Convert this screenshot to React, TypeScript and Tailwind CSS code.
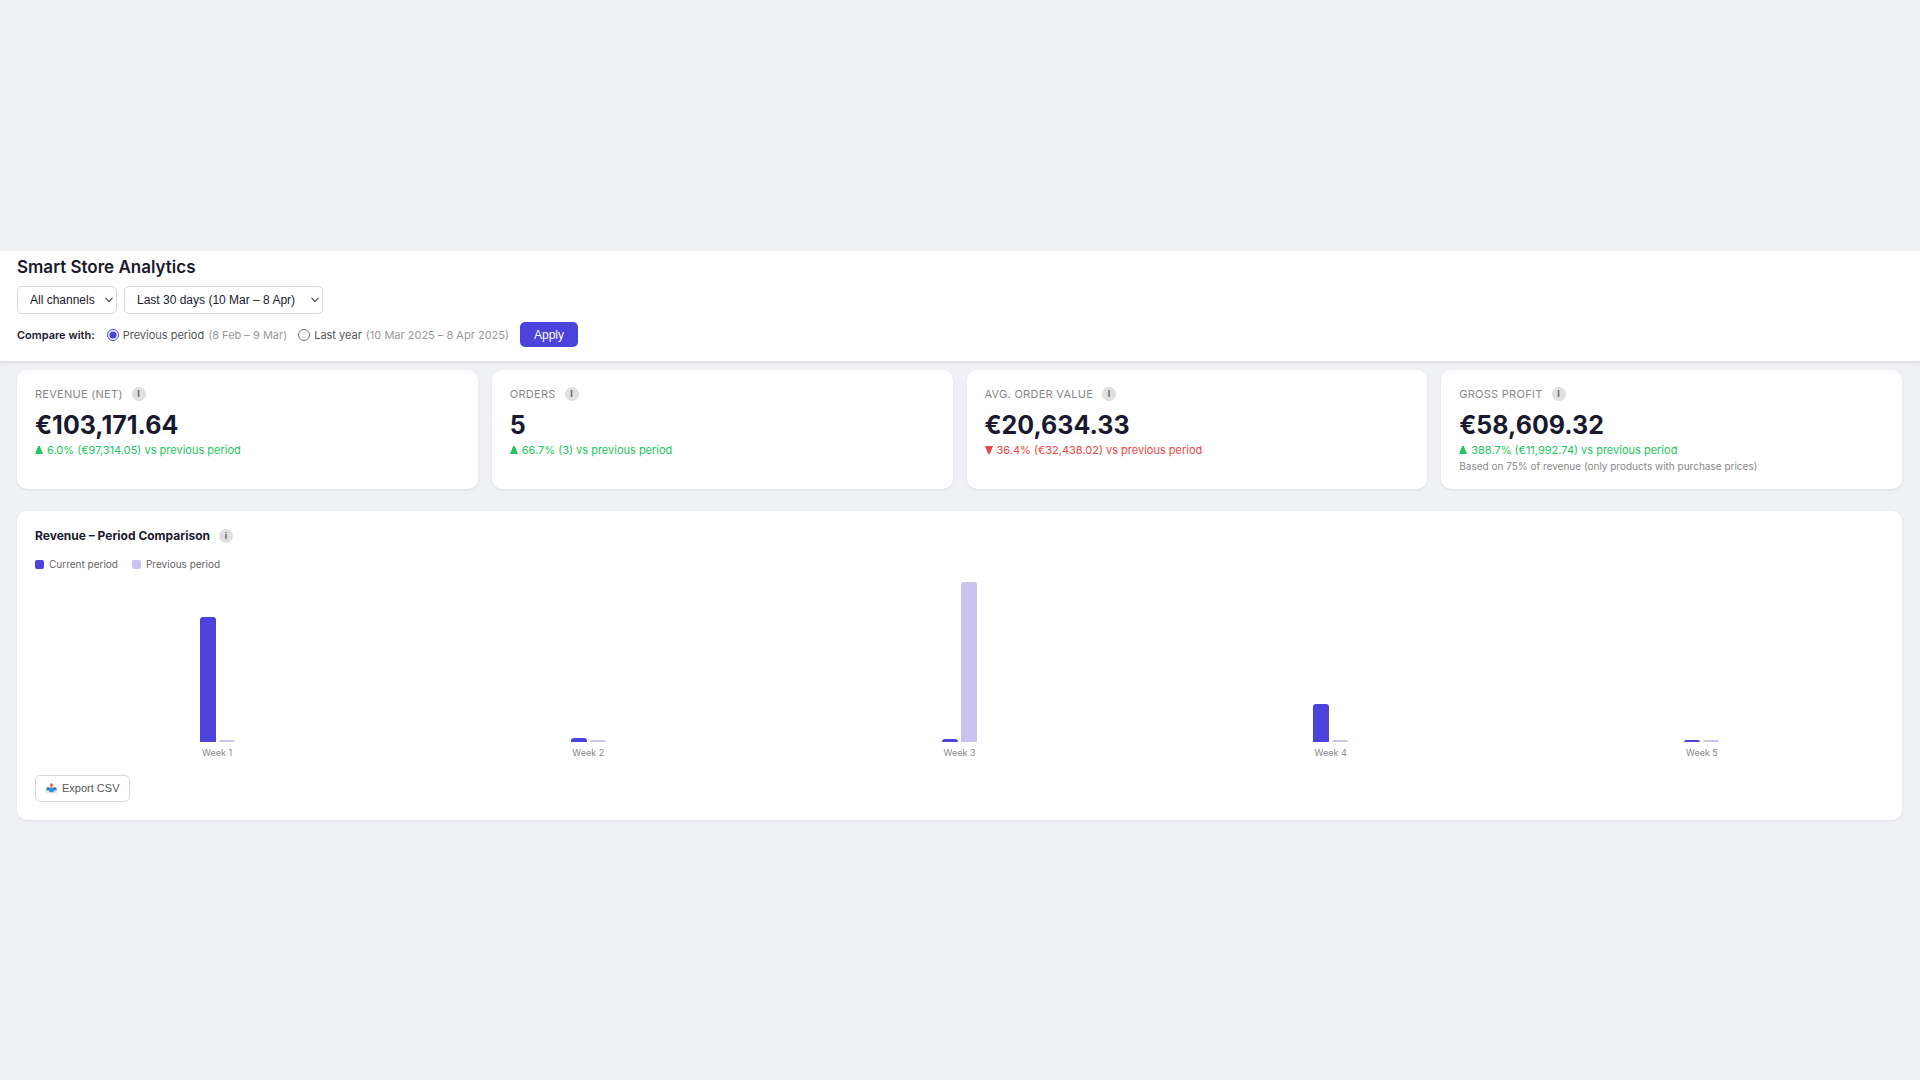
import { useState } from "react";

type Kpi = {
    label: string;
    value: string;
    up: boolean;
    change: string;
    note?: string;
};

const kpis: Kpi[] = [
    { label: "Revenue (net)", value: "€103,171.64", up: true, change: "6.0% (€97,314.05) vs previous period" },
    { label: "Orders", value: "5", up: true, change: "66.7% (3) vs previous period" },
    { label: "Avg. order value", value: "€20,634.33", up: false, change: "36.4% (€32,438.02) vs previous period" },
    {
        label: "Gross profit",
        value: "€58,609.32",
        up: true,
        change: "388.7% (€11,992.74) vs previous period",
        note: "Based on 75% of revenue (only products with purchase prices)",
    },
];

// bar heights in px, the tallest one fills the chart
const weeks = [
    { label: "Week 1", current: 125, previous: 2 },
    { label: "Week 2", current: 4, previous: 2 },
    { label: "Week 3", current: 3, previous: 160 },
    { label: "Week 4", current: 38, previous: 2 },
    { label: "Week 5", current: 2, previous: 2 },
];

const InfoBadge = ({ children }: { children: string }) => (
    <button
        type="button"
        aria-label="More info"
        className="flex h-[14px] w-[14px] shrink-0 items-center justify-center rounded-full bg-[#e0e0e0] text-[9px] leading-[14px] font-bold text-[#666]"
    >
        {children}
    </button>
);

const Triangle = ({ up }: { up: boolean }) => (
    <svg width="8" height="8" viewBox="0 0 8 8" fill="currentColor" aria-hidden="true">
        <path d={up ? "M3.2 0h1.6L8 8H0Z" : "M0 0H8L4.8 8H3.2Z"} />
    </svg>
);

const Dropdown = ({ label, options, className }: { label: string; options: string[]; className: string }) => (
    <div className={`relative ${className}`}>
        <select
            aria-label={label}
            className="h-7 w-full appearance-none rounded-[5px] border border-[#d9d9d9] bg-white pr-4 pl-3 font-['Liberation_Sans',sans-serif] text-[12px] leading-4 text-[#1a1a2e]"
        >
            {options.map((option) => (
                <option key={option}>{option}</option>
            ))}
        </select>
        <svg
            className="pointer-events-none absolute top-[11px] right-1"
            width="8"
            height="6"
            viewBox="0 0 8 6"
            fill="none"
            stroke="#444"
            strokeWidth="1.1"
            strokeLinecap="round"
            strokeLinejoin="round"
            aria-hidden="true"
        >
            <path d="M.8 1.2 4 4.6 7.2 1.2" />
        </svg>
    </div>
);

const OutboxIcon = () => (
    <svg width="11" height="11" viewBox="0 0 11 11" aria-hidden="true">
        <path d="M.8 5h9.4l.6 3v2.6H.2V8z" fill="#e6e9ec" />
        <path d="M.8 4.8h9.4l.6 2.6H8.4L7 9.2H4L2.6 7.4H.2z" fill="#3b8fe0" />
        <path d="M.8 4.6h2.6l.4 1.2H.5zM7.6 4.6h2.6l.3 1.2H7.2z" fill="#4a6078" />
        <path d="M5.5 0 7.6 2.2H6.5v2.4h-2V2.2H3.4z" fill="#f05545" />
    </svg>
);

const App = () => {
    const [compare, setCompare] = useState("previous");

    const periods = [
        { id: "previous", name: "Previous period", range: "(8 Feb – 9 Mar)" },
        { id: "year", name: "Last year", range: "(10 Mar 2025 – 8 Apr 2025)" },
    ];

    return (
        <div className="min-h-screen bg-[#f0f1f5] pt-[251px] font-[Inter,sans-serif] text-[#1a1a2e]">
            <header className="bg-white pt-1 pr-[18px] pb-[14px] pl-[17px] shadow-[0_2px_3px_rgba(0,0,0,0.08)]">
                <h1 className="text-[17px] leading-6 font-semibold">Smart Store Analytics</h1>

                <div className="mt-[7px] flex gap-[7px]">
                    <Dropdown label="Channel" options={["All channels"]} className="w-[100px]" />
                    <Dropdown label="Date range" options={["Last 30 days (10 Mar – 8 Apr)"]} className="w-[199px]" />
                </div>

                <form
                    className="mt-2 flex items-center text-[11px] leading-4"
                    onSubmit={(e) => e.preventDefault()}
                >
                    <span className="mr-3 font-semibold">Compare with:</span>
                    {periods.map((period) => (
                        <label key={period.id} className="mr-[11px] flex items-center gap-1 text-[#555]">
                            <input
                                type="radio"
                                name="compare"
                                checked={compare === period.id}
                                onChange={() => setCompare(period.id)}
                                className="h-3 w-3 accent-[#4b43dc]"
                            />
                            <span>{period.name}</span>
                            <span className="text-[#999]">{period.range}</span>
                        </label>
                    ))}
                    <button
                        type="submit"
                        className="h-[25px] rounded-[5px] bg-[#4b43dc] px-[14px] font-['Liberation_Sans',sans-serif] text-[12px] text-white"
                    >
                        Apply
                    </button>
                </form>
            </header>

            <main className="pt-[9px] pr-[18px] pl-[17px]">
                <section className="grid grid-cols-4 gap-[14px]">
                    {kpis.map((kpi) => (
                        <article
                            key={kpi.label}
                            className="rounded-[10px] bg-white px-[18px] pt-4 pb-[15px] shadow-[0_1px_3px_rgba(0,0,0,0.08)]"
                        >
                            <div className="flex items-center gap-[9px] text-[11px] leading-4 tracking-wide text-[#888] uppercase">
                                <span>{kpi.label}</span>
                                <InfoBadge>I</InfoBadge>
                            </div>
                            <div className="mt-[7px] text-[25px] leading-8 font-bold">{kpi.value}</div>
                            <div
                                className={`mt-px flex items-center gap-1 text-[11px] leading-4 ${kpi.up ? "text-[#22c55e]" : "text-[#ef4444]"}`}
                            >
                                <Triangle up={kpi.up} />
                                <span>{kpi.change}</span>
                            </div>
                            {kpi.note && <p className="text-[10px] leading-4 text-[#888]">{kpi.note}</p>}
                        </article>
                    ))}
                </section>

                <section className="mt-[22px] rounded-[10px] bg-white px-[18px] pt-[17px] pb-[18px] shadow-[0_1px_3px_rgba(0,0,0,0.08)]">
                    <div className="flex items-center gap-[9px]">
                        <h2 className="text-[12px] leading-4 font-bold">Revenue – Period Comparison</h2>
                        <InfoBadge>i</InfoBadge>
                    </div>

                    <div className="mt-3 flex gap-[14px] text-[10px] leading-4 text-[#666]">
                        <span className="flex items-center gap-[5px]">
                            <i className="h-[9px] w-[9px] rounded-[2px] bg-[#4b43dc]" />
                            Current period
                        </span>
                        <span className="flex items-center gap-[5px]">
                            <i className="h-[9px] w-[9px] rounded-[2px] bg-[#c7c4ef]" />
                            Previous period
                        </span>
                    </div>

                    <div className="mt-[10px] flex gap-[7px]">
                        {weeks.map((week) => (
                            <div key={week.label} className="flex-1">
                                <div className="flex h-[160px] items-end justify-center gap-[3px]">
                                    <div className="w-4 rounded-t-[3px] bg-[#4b43dc]" style={{ height: week.current }} />
                                    <div className="w-4 rounded-t-[3px] bg-[#c7c4ef]" style={{ height: week.previous }} />
                                </div>
                                <div className="mt-[3px] text-center text-[9px] leading-4 text-[#888]">{week.label}</div>
                            </div>
                        ))}
                    </div>

                    <button
                        type="button"
                        className="mt-[14px] flex h-[27px] items-center gap-[5px] rounded-[5px] border border-[#d9d9d9] bg-white px-[10px] font-['Liberation_Sans',sans-serif] text-[11px] text-[#555]"
                    >
                        <OutboxIcon />
                        Export CSV
                    </button>
                </section>
            </main>
        </div>
    );
};

export default App;
